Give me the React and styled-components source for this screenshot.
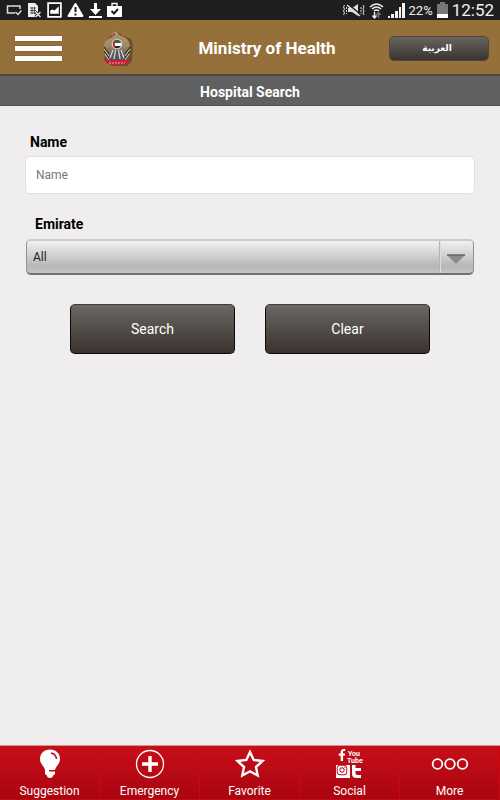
import { useState } from "react";
import styled, { createGlobalStyle } from "styled-components";
import { FaFacebookF, FaInstagram } from "react-icons/fa";

const GlobalStyle = createGlobalStyle`
  * {
    box-sizing: border-box;
  }
  body {
    margin: 0;
    background-color: #efedee;
    font-family: Roboto, "Liberation Sans", sans-serif;
  }
  button, input, select {
    font-family: inherit;
  }
`;

const Page = styled.div`
  display: flex;
  flex-direction: column;
  min-height: 100vh;
`;

const StatusBar = styled.div`
  display: flex;
  align-items: center;
  justify-content: space-between;
  height: 20px;
  padding: 0 6px;
  background-color: #1e1e1e;
  color: #f2f2f2;
`;

const StatusIcons = styled.div`
  display: flex;
  align-items: center;
  gap: ${({ $gap }) => $gap}px;

  svg {
    display: block;
  }
`;

const Battery = styled.span`
  font-size: 13px;
`;

const Clock = styled.span`
  font-size: 17px;
  line-height: 20px;
`;

const Header = styled.header`
  display: grid;
  grid-template-columns: 1fr auto 1fr;
  align-items: center;
  height: 54px;
  padding: 2px 11px 0 15px;
  background-color: #96703a;
`;

const HeaderLeft = styled.div`
  display: flex;
  align-items: center;
  gap: 41px;
`;

const MenuBtn = styled.button`
  display: flex;
  flex-direction: column;
  gap: 5px;
  width: 47px;
  padding: 0;
  border: none;
  background: transparent;
  cursor: pointer;
`;

const MenuLine = styled.span`
  height: 5px;
  width: 100%;
  background-color: #fff;
  box-shadow: 0 0 1px #5f431a;
`;

const Title = styled.h1`
  margin: 0 0 0 30px;
  color: #fff;
  font-size: 17px;
  line-height: 24px;
  font-weight: 700;
  white-space: nowrap;
`;

const LanguageBtn = styled.button`
  justify-self: end;
  width: 100px;
  height: 25px;
  padding: 0 4px 0 0;
  border: 1px solid #51463d;
  border-radius: 5px;
  background: linear-gradient(#686461, #3a332f);
  color: #fff;
  font-family: "DejaVu Sans", sans-serif;
  font-size: 9px;
  font-weight: 700;
  cursor: pointer;
`;

const SubTitle = styled.h2`
  margin: 0;
  height: 32px;
  padding-top: 1px;
  border-top: 2px solid #484848;
  border-bottom: 1px solid #505050;
  background-color: #606060;
  color: #fff;
  font-size: 14px;
  line-height: 30px;
  font-weight: 700;
  text-align: center;
`;

const SearchForm = styled.form`
  display: flex;
  flex-direction: column;
  flex: 1;
  padding: 26px 25px;
`;

const Label = styled.label`
  padding-left: ${({ $indent }) => $indent}px;
  color: #000;
  font-size: 14px;
  line-height: 20px;
  font-weight: 700;
`;

const NameInput = styled.input`
  height: 38px;
  margin: 4px 0 20px;
  padding: 0 10px;
  border: 1px solid #e2e0e1;
  border-radius: 5px;
  background-color: #fff;
  color: #333;
  font-size: 12px;

  &::placeholder {
    color: #777;
  }
`;

const SelectBox = styled.div`
  display: grid;
  grid-template-columns: 1fr 34px;
  height: 36px;
  margin: 5px 1px 29px;
  border: 1px solid #919191;
  border-top: 2px solid #cbcbcb;
  border-bottom: 2px solid #717171;
  border-radius: 5px;
  background: linear-gradient(#f1f1f1, #d0d0d0 45%, #b7b7b7 78%, #c4c4c4);
`;

const Select = styled.select`
  grid-area: 1 / 1 / 2 / 3;
  width: 100%;
  padding: 0 6px;
  border: none;
  background: transparent;
  color: #222;
  font-size: 12px;
  appearance: none;
`;

const SelectArrow = styled.span`
  grid-area: 1 / 2 / 2 / 3;
  display: flex;
  align-items: center;
  justify-content: center;
  padding: 4px 2px 0 0;
  border-left: 1px solid #b4b4b4;
  box-shadow: inset 1px 0 0 #dedede;
  pointer-events: none;
`;

const BtnContainer = styled.div`
  display: flex;
  gap: 30px;
  padding: 0 45px;
`;

const Btn = styled.button`
  flex: 1;
  height: 50px;
  border: 1px solid #0c0a09;
  border-top-color: #3f3c3a;
  border-radius: 5px;
  background: linear-gradient(#6b6764, #3a322e);
  color: #fff;
  font-size: 14px;
  cursor: pointer;
`;

const TabBar = styled.nav`
  display: grid;
  grid-template-columns: repeat(5, 1fr);
  height: 55px;
  border-top: 1px solid #d9918f;
`;

const Tab = styled.a`
  display: flex;
  flex-direction: column;
  align-items: center;
  justify-content: space-between;
  padding-top: 3px;
  border-right: 1px solid #c8060c;
  border-bottom: 1px solid #c8060c;
  background: linear-gradient(#c70e19, #a90510);
  color: #fff;
  font-size: 12px;
  line-height: 16px;
  text-decoration: none;

  svg {
    display: block;
  }
`;

const Emblem = () => (
  <svg width="32" height="38" viewBox="0 0 32 38" role="img" aria-label="Emblem">
    <defs>
      <linearGradient id="wing" x1="0" y1="0" x2="0" y2="1">
        <stop offset="0" stopColor="#b8946a" />
        <stop offset="0.45" stopColor="#a08868" />
        <stop offset="1" stopColor="#3f3934" />
      </linearGradient>
      <clipPath id="flag">
        <circle cx="14" cy="15" r="4.3" />
      </clipPath>
    </defs>
    <path d="M3 11 L9 6 L14 3 L20 7 L28 10 L30 16 L29 32 L24 37 L10 37 L3 34Z" fill="#40301b" opacity=".5" />
    <path d="M8 6 L11 3 Q14 1 16 6 L21 8 Q27 11 27 18 L27 31 L23 35 L6 35 L1 31 L2 24 L1 18 Q1 11 7 9 L11 7Z" fill="url(#wing)" />
    <path d="M1 18 L6 25 M1 22 L6 29 M27 18 L22 25 M27 22 L22 29" stroke="#352c25" strokeWidth="1.2" />
    <path d="M1 20 L6 27 M2 25 L6 31 M27 20 L22 27 M26 25 L22 31" stroke="#cfc7bb" strokeWidth="1" />
    <path d="M9 21 L6 27 L8 32 L14 31 L20 32 L22 27 L19 21Z" fill="#55565a" />
    <path d="M10 21 L7 29 M12.500 21 L11 30 M15.500 21 L17 30 M18 21 L21 29" stroke="#cfd0d2" strokeWidth="1.4" />
    <circle cx="14" cy="15" r="5.3" fill="#d5d2cc" />
    <g clipPath="url(#flag)">
      <path fill="#16704d" d="M9 10 H19 V14 H9Z" />
      <path fill="#fff" d="M9 14 H19 V17 H9Z" />
      <path fill="#222" d="M9 17 H19 V20 H9Z" />
      <path fill="#cc2634" d="M9 10 H12 V20 H9Z" />
    </g>
    <path d="M2 29 Q4 31 8 32 Q14 30 20 32 Q25 31 27 29 L25 34 Q14 38 3 34Z" fill="#d71c35" />
    <path d="M6 34 Q14 34 22 34" fill="none" stroke="#f4a1a4" strokeWidth="1.2" strokeDasharray="2 1" />
    <path d="M10 6 L12 5" stroke="#332519" />
  </svg>
);

const CastIcon = () => (
  <svg width="16" height="12" viewBox="0 0 16 12" fill="none" stroke="#ddd">
    <path d="M14 5 V2 H1.5 V9 H9" strokeWidth="1.5" />
    <path d="M9.5 8 L12 10.5 L15.5 6.5" strokeWidth="1.4" />
  </svg>
);

const SheetIcon = () => (
  <svg width="15" height="16" viewBox="0 0 15 16">
    <path d="M1 1 H8 L11 4 V15 H1Z" fill="#eee" />
    <path d="M3 6 H9 M3 8.5 H9 M3 11 H8 M5 5 V12 M7.5 5 V12" stroke="#333" strokeWidth=".8" />
    <path d="M8.5 10 L13.5 15 M13.5 10 L8.5 15" stroke="#1e1e1e" strokeWidth="3" />
    <path d="M8.5 10 L13.5 15 M13.5 10 L8.5 15" stroke="#eee" strokeWidth="1.3" />
  </svg>
);

const ImageIcon = () => (
  <svg width="15" height="16" viewBox="0 0 14 15">
    <path d="M1 1 H13 V14 H1Z" fill="none" stroke="#fff" strokeWidth="1.6" />
    <path d="M3 11 V8 L5 7 L7 8 L11 4 V11Z" fill="#fff" />
  </svg>
);

const WarningIcon = () => (
  <svg width="17" height="16" viewBox="0 0 17 16">
    <path d="M8.5 2 L15.5 14 H1.5Z" fill="#fff" stroke="#fff" strokeWidth="2" strokeLinejoin="round" />
    <path d="M8.5 5 V10 M8.5 11.5 V13.5" stroke="#1e1e1e" strokeWidth="2" />
  </svg>
);

const DownloadIcon = () => (
  <svg width="13" height="15" viewBox="0 0 13 15" fill="#fff">
    <path d="M5 0 H8 V6 H12 L6.5 12 L1 6 H5Z M0 13 H13 V15 H0Z" />
  </svg>
);

const BagIcon = () => (
  <svg width="15" height="16" viewBox="0 0 15 16">
    <path d="M5 4 V1.5 H10 V4" fill="none" stroke="#fff" strokeWidth="1.3" />
    <path d="M0 4 H15 V15 H0Z" fill="#fff" />
    <path d="M4.5 9 L7 11.5 L11 7" fill="none" stroke="#1e1e1e" strokeWidth="2" />
  </svg>
);

const VibrateIcon = () => (
  <svg width="22" height="14" viewBox="0 0 22 14" fill="none" stroke="#ddd">
    <path d="M1.500 2 L.5 4 L1.500 6 L.5 8 L1.500 10 L.5 12 M20 2 L21 4 L20 6 L21 8 L20 10 L21 12" strokeWidth="1" />
    <path d="M3.500 4 V11 M18 4 V11" strokeWidth="1" strokeDasharray="2 1" />
    <path d="M5 5 H9 L15 1 V13 L9 9 H5Z" fill="#ddd" stroke="none" />
    <path d="M5 1 L17 11" stroke="#1e1e1e" strokeWidth="1.6" />
    <path d="M4 2 L17 13" strokeWidth="1.5" />
  </svg>
);

const WifiIcon = () => (
  <svg width="15" height="17" viewBox="0 0 15 17" fill="none" stroke="#eee">
    <path d="M1 5 Q7.5 -1 14 5 M3 7 Q7.5 3 12 7 M5 9 Q7.5 7 10 9" strokeWidth="1.6" />
    <path d="M5.500 10 V15 M3.500 13.500 L5.500 16 L7.500 13.500" strokeWidth="1.4" />
    <path d="M9.500 16 V11 M7.500 13 L9.500 10.500 L11.500 13" stroke="#777" strokeWidth="1.4" />
  </svg>
);

const SignalIcon = () => (
  <svg width="17" height="16" viewBox="0 0 17 16" fill="#f2f2f2">
    <path d="M0 14 H2 V16 H0Z M3 12 H6 V16 H3Z M7 9 H10 V16 H7Z M11 5 H13 V16 H11Z M14 1 H17 V16 H14Z" />
  </svg>
);

const BatteryIcon = () => (
  <svg width="11" height="16" viewBox="0 0 11 16">
    <path d="M3 0 H8 V2 H11 V16 H0 V2 H3Z" fill="#777" />
    <path d="M0 12 H11 V16 H0Z" fill="#fff" />
  </svg>
);

const BulbIcon = () => (
  <svg width="22" height="30" viewBox="0 0 22 30">
    <path d="M11 0.5 C5 .5 1 4.500 1 10 C1 15 5 17 6 21 H16 C17 17 21 15 21 10 C21 4.500 17 .5 11 .5Z" fill="#fff" />
    <path d="M6 20 H10 V22.500 H16 V25 Q14 26 13.500 28 Q11 30 8.500 28 Q8 26 6 25Z" fill="#fff" />
    <path d="M12 4 Q17 5 17.500 10" fill="none" stroke="#bd0c17" strokeWidth="1.6" />
  </svg>
);

const PlusIcon = () => (
  <svg width="30" height="30" viewBox="0 0 30 30" fill="none" stroke="#fff">
    <circle cx="15" cy="15" r="13.500" strokeWidth="1.3" />
    <path d="M15 7 V23 M7 15 H23" strokeWidth="3.4" />
  </svg>
);

const StarIcon = () => (
  <svg width="30" height="30" viewBox="0 0 30 30" fill="none" stroke="#fff" strokeWidth="2.4">
    <path d="M15 3 L18.700 11 L27.500 12 L21 18 L22.700 26.500 L15 22.300 L7.300 26.500 L9 18 L2.500 12 L11.300 11Z" />
  </svg>
);

const SocialIcon = () => (
  <svg width="28" height="30" viewBox="0 0 28 30" fill="#fff">
    <FaFacebookF x="0" y="0" width="10" height="15" />
    <text x="12" y="7" fontSize="7" fontWeight="700">You</text>
    <text x="11" y="14" fontSize="7" fontWeight="700">Tube</text>
    <path d="M0 16 H14 V29 H0Z" />
    <FaInstagram x="0" y="15" width="14" height="15" color="#b90b16" />
    <path d="M16 16 H19.500 V19 H25 V22 H19.500 V24 Q19.500 26 21.500 26 H25 V29 H20.500 Q16 29 16 24.500Z" />
  </svg>
);

const MoreIcon = () => (
  <svg width="38" height="30" viewBox="0 0 38 30" fill="none" stroke="#fff" strokeWidth="1.8">
    <circle cx="6.500" cy="15" r="4.800" />
    <circle cx="19" cy="15" r="4.800" />
    <circle cx="31.500" cy="15" r="4.800" />
  </svg>
);

const tabs = [
  { name: "Suggestion", Icon: BulbIcon },
  { name: "Emergency", Icon: PlusIcon },
  { name: "Favorite", Icon: StarIcon },
  { name: "Social", Icon: SocialIcon },
  { name: "More", Icon: MoreIcon },
];

const emirates = ["All", "Abu Dhabi", "Dubai", "Sharjah", "Ajman", "Umm Al Quwain", "Ras Al Khaimah", "Fujairah"];

const App = () => {
  const [name, setName] = useState("");
  const [emirate, setEmirate] = useState("All");

  const onClearBtnClick = () => {
    setName("");
    setEmirate("All");
  };

  return (
    <>
      <GlobalStyle />
      <Page>
        <StatusBar>
          <StatusIcons $gap={5}>
            <CastIcon />
            <SheetIcon />
            <ImageIcon />
            <WarningIcon />
            <DownloadIcon />
            <BagIcon />
          </StatusIcons>
          <StatusIcons $gap={4}>
            <VibrateIcon />
            <WifiIcon />
            <SignalIcon />
            <Battery>22%</Battery>
            <BatteryIcon />
            <Clock>12:52</Clock>
          </StatusIcons>
        </StatusBar>
        <Header>
          <HeaderLeft>
            <MenuBtn type="button" aria-label="Menu">
              <MenuLine />
              <MenuLine />
              <MenuLine />
            </MenuBtn>
            <Emblem />
          </HeaderLeft>
          <Title>Ministry of Health</Title>
          <LanguageBtn type="button" lang="ar">العربية</LanguageBtn>
        </Header>
        <SubTitle>Hospital Search</SubTitle>
        <SearchForm onSubmit={(e) => e.preventDefault()}>
          <Label htmlFor="name" $indent={5}>Name</Label>
          <NameInput
            id="name"
            placeholder="Name"
            value={name}
            onChange={(e) => setName(e.target.value)}
          />
          <Label htmlFor="emirate" $indent={10}>Emirate</Label>
          <SelectBox>
            <Select id="emirate" value={emirate} onChange={(e) => setEmirate(e.target.value)}>
              {emirates.map((item) => (
                <option key={item}>{item}</option>
              ))}
            </Select>
            <SelectArrow>
              <svg width="20" height="11" viewBox="0 0 20 11">
                <path d="M1 1 H19 L10 10Z" fill="#8b8b8b" />
                <path d="M1 1 H19" stroke="#666" strokeWidth="1.5" />
              </svg>
            </SelectArrow>
          </SelectBox>
          <BtnContainer>
            <Btn type="submit">Search</Btn>
            <Btn type="button" onClick={onClearBtnClick}>Clear</Btn>
          </BtnContainer>
        </SearchForm>
        <TabBar>
          {tabs.map(({ name, Icon }) => (
            <Tab key={name} href={`#${name.toLowerCase()}`}>
              <Icon />
              {name}
            </Tab>
          ))}
        </TabBar>
      </Page>
    </>
  );
};

export default App;
